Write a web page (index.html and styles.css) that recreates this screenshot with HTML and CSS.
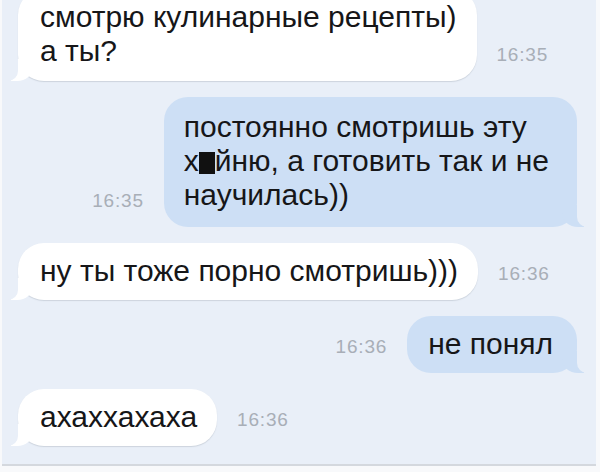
FILE: index.html
```html
<!DOCTYPE html>
<html lang="ru">

<head>
    <meta charset="UTF-8" />
    <meta name="viewport" content="width=device-width, initial-scale=1.0" />
    <title>Переписка</title>
    <link rel="stylesheet" href="styles.css">
</head>

<body>

    <!-- Chat screen -->
    <div class="screen">
        <div class="chat">

            <div class="row row-in first">
                <div class="bubble in multi">смотрю кулинарные рецепты)<br>а ты?</div>
                <span class="time">16:35</span>
            </div>

            <div class="row row-out">
                <span class="time">16:35</span>
                <div class="bubble out multi">постоянно смотришь эту<br>х<span class="censor"></span>йню, а готовить так и не<br>научилась))</div>
            </div>

            <div class="row row-in">
                <div class="bubble in">ну ты тоже порно смотришь)))</div>
                <span class="time">16:36</span>
            </div>

            <div class="row row-out">
                <span class="time">16:36</span>
                <div class="bubble out">не понял</div>
            </div>

            <div class="row row-in">
                <div class="bubble in">ахаххахаха</div>
                <span class="time">16:36</span>
            </div>

        </div>
    </div>

</body>

</html>
```

FILE: styles.css
```css
* {
    box-sizing: border-box;
}

body {
    margin: 0;
    background: #f8f9fb;
    font-family: 'Liberation Sans', Arial, sans-serif;
    color: #161618;
}

.screen {
    width: 594px;
    height: 466px;
    margin-left: 2px;
    background: #e9eff8;
    border-bottom: 2px solid #d4d8de;
    overflow: hidden;
}

.chat {
    display: flex;
    flex-direction: column;
    gap: 16px;
    padding: 0 19px 0 16px;
}

.row {
    display: flex;
    align-items: flex-end;
    gap: 20px;
}

.row-out {
    justify-content: flex-end;
}

.first {
    margin-top: -11px;
}

.bubble {
    position: relative;
    z-index: 0;
    font-size: 30px;
    line-height: 34px;
    padding: 11px 20px 12px 22px;
    border-radius: 26px;
}

.bubble.in {
    background: #fff;
    box-shadow: 0 1px 1px rgba(120, 130, 145, 0.25);
}

.bubble.in.multi {
    padding-bottom: 13px;
}

.bubble.out {
    background: #cddff5;
    padding: 11px 24px 12px 21px;
    border-radius: 24px;
}

.bubble.out.multi {
    padding: 13px 28px 15px 20px;
}

/* bubble tails */
.bubble::before,
.bubble::after {
    content: "";
    position: absolute;
    bottom: 0;
    height: 22px;
    z-index: -1;
}

.bubble.in::before {
    left: -7px;
    width: 22px;
    background: #fff;
    border-bottom-right-radius: 16px 14px;
}

.bubble.in::after {
    left: -12px;
    width: 12px;
    background: #e9eff8;
    border-bottom-right-radius: 10px;
}

.bubble.out::before {
    right: -7px;
    width: 22px;
    background: #cddff5;
    border-bottom-left-radius: 16px 14px;
}

.bubble.out::after {
    right: -12px;
    width: 12px;
    background: #e9eff8;
    border-bottom-left-radius: 10px;
}

.censor {
    display: inline-block;
    width: 16px;
    height: 22px;
    background: #111;
    vertical-align: -3px;
}

.time {
    font-size: 19px;
    letter-spacing: 0.8px;
    color: #a8aeb7;
    margin-bottom: 15px;
}
```
